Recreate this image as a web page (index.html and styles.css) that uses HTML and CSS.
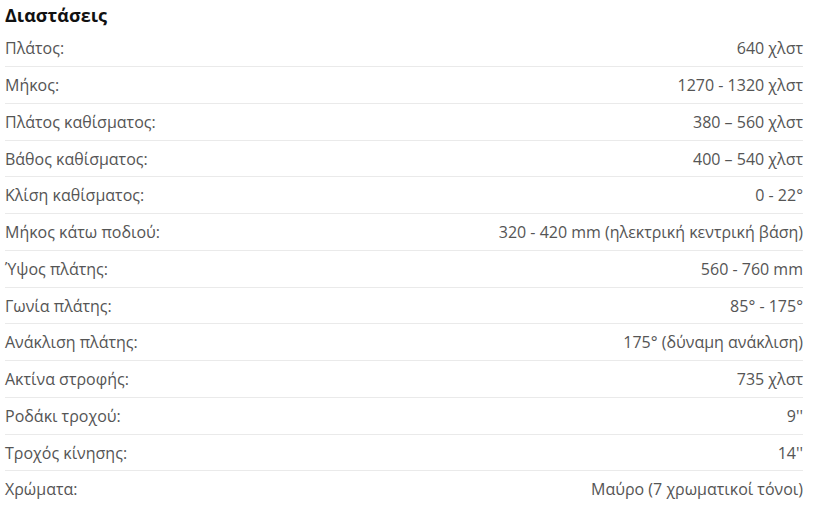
FILE: index.html
```html
<!DOCTYPE html>
<html lang="el">
<head>
<meta charset="utf-8">
<link rel="stylesheet" href="styles.css">
</head>
<body>
<div class="specs">
  <h3 class="specs-title">Διαστάσεις</h3>
  <div class="row"><span>Πλάτος:</span><span>640 χλστ</span></div>
  <div class="row"><span>Μήκος:</span><span>1270 - 1320 χλστ</span></div>
  <div class="row"><span>Πλάτος καθίσματος:</span><span>380 – 560 χλστ</span></div>
  <div class="row"><span>Βάθος καθίσματος:</span><span>400 – 540 χλστ</span></div>
  <div class="row"><span>Κλίση καθίσματος:</span><span>0 - 22°</span></div>
  <div class="row"><span>Μήκος κάτω ποδιού:</span><span>320 - 420 mm (ηλεκτρική κεντρική βάση)</span></div>
  <div class="row"><span>Ύψος πλάτης:</span><span>560 - 760 mm</span></div>
  <div class="row"><span>Γωνία πλάτης:</span><span>85° - 175°</span></div>
  <div class="row"><span>Ανάκλιση πλάτης:</span><span>175° (δύναμη ανάκλιση)</span></div>
  <div class="row"><span>Ακτίνα στροφής:</span><span>735 χλστ</span></div>
  <div class="row"><span>Ροδάκι τροχού:</span><span>9''</span></div>
  <div class="row"><span>Τροχός κίνησης:</span><span>14''</span></div>
  <div class="row"><span>Χρώματα:</span><span>Μαύρο (7 χρωματικοί τόνοι)</span></div>
</div>
</body>
</html>
```
FILE: styles.css
```css
html, body {
  margin: 0;
  padding: 0;
  background: #fff;
}
.specs {
  width: 798px;
  padding: 0 0 0 5px;
  font-family: "Open Sans", sans-serif;
  font-size: 16px;
  color: #555;
}
.specs-title {
  margin: 0;
  font-size: 18px;
  font-weight: 700;
  color: #111;
  line-height: 30px;
  height: 30.25px;
}
.row {
  display: flex;
  justify-content: space-between;
  align-items: center;
  padding: 9px 0 7px;
  line-height: 19.75px;
  border-bottom: 1px solid #eaeaea;
}
.row:last-child {
  border-bottom: none;
}
```
